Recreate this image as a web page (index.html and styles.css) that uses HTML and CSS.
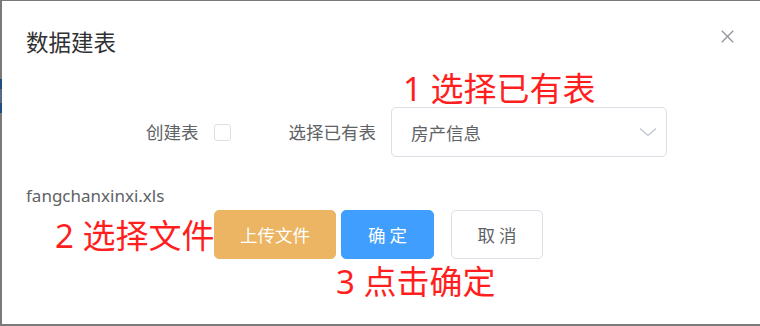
FILE: index.html
```html
<!DOCTYPE html>
<html lang="zh">
<head>
<meta charset="utf-8">
<title>数据建表</title>
<link rel="stylesheet" href="styles.css">
</head>
<body>
<div class="backdrop">
  <div class="edge-mark"></div>
  <div class="dialog">
    <div class="header">
      <span class="title">数据建表</span>
      <svg class="close" width="13" height="13" viewBox="0 0 13 13"><path d="M0.8 0.8 L12.2 12.2 M12.2 0.8 L0.8 12.2" stroke="#909399" stroke-width="1.3" fill="none"/></svg>
    </div>
    <div class="body">
      <div class="form-row">
        <span class="label">创建表</span>
        <span class="checkbox"></span>
        <span class="label label-select">选择已有表</span>
        <div class="select">
          <span class="select-value">房产信息</span>
          <svg class="chevron" width="18" height="10" viewBox="0 0 18 10"><polyline points="1,1.5 9,8.5 17,1.5" stroke="#c0c4cc" stroke-width="1.3" fill="none"/></svg>
        </div>
      </div>
      <div class="file-name">fangchanxinxi.xls</div>
      <div class="actions">
        <button class="btn btn-upload">上传文件</button>
        <button class="btn btn-primary">确 定</button>
        <button class="btn btn-default">取 消</button>
      </div>
    </div>
    <span class="note note-1">1 选择已有表</span>
    <span class="note note-2">2 选择文件</span>
    <span class="note note-3">3 点击确定</span>
  </div>
</div>
</body>
</html>
```

FILE: styles.css
```css
html, body {
  margin: 0;
  padding: 0;
}
body {
  width: 760px;
  height: 326px;
  overflow: hidden;
  background: #7a7a7a;
  font-family: "Noto Sans", "Noto Sans CJK SC", sans-serif;
}
.backdrop {
  position: relative;
  height: 326px;
  padding: 1px 0 0 2px;
  box-sizing: border-box;
}
.edge-mark {
  position: absolute;
  left: 0;
  top: 79px;
  width: 2px;
  height: 34px;
  background: linear-gradient(#1e4f7c 0 30%, #5a6a86 30% 70%, #1e4f7c 70%);
}
.dialog {
  position: relative;
  background: #fff;
  height: 323px;
  box-sizing: border-box;
}
.header {
  display: flex;
  justify-content: space-between;
  align-items: flex-start;
  padding: 25px 26px 0 24px;
  height: 30px;
}
.title {
  font-size: 22.5px;
  line-height: 30px;
  color: #303133;
  font-family: "Noto Sans CJK SC", sans-serif;
}
.close {
  display: block;
  margin-top: 4px;
}
.body {
  padding: 0 0 0 24px;
}
.form-row {
  display: flex;
  align-items: center;
  margin-top: 51px;
  padding-left: 120px;
  height: 50px;
}
.label {
  font-family: "Noto Sans CJK SC", sans-serif;
  font-size: 17.5px;
  color: #606266;
  line-height: 24px;
}
.checkbox {
  width: 15px;
  height: 15px;
  border: 1px solid #dcdfe6;
  border-radius: 3px;
  margin-left: 15px;
  background: #fff;
}
.label-select {
  margin-left: 58px;
}
.select {
  margin-left: 15px;
  width: 276px;
  height: 50px;
  box-sizing: border-box;
  border: 1px solid #dcdfe6;
  border-radius: 5px;
  display: flex;
  align-items: center;
  justify-content: space-between;
  padding: 0 9px 0 19px;
}
.select-value {
  font-family: "Noto Sans CJK SC", sans-serif;
  font-size: 17.5px;
  color: #606266;
}
.chevron {
  display: block;
}
.file-name {
  margin-top: 27px;
  font-size: 17px;
  line-height: 24px;
  color: #606266;
}
.actions {
  display: flex;
  margin-top: 2px;
  padding-left: 188px;
}
.btn {
  height: 49px;
  border-radius: 5px;
  border: 1px solid transparent;
  font-family: "Noto Sans CJK SC", sans-serif;
  font-size: 17.5px;
  padding: 0;
  cursor: pointer;
}
.btn-upload {
  width: 122px;
  background: #ebb563;
  border-color: #ebb563;
  color: #fff;
}
.btn-primary {
  width: 93px;
  margin-left: 5px;
  background: #409eff;
  border-color: #409eff;
  color: #fff;
}
.btn-default {
  width: 92px;
  margin-left: 17px;
  background: #fff;
  border-color: #dcdfe6;
  color: #606266;
}
.note {
  position: absolute;
  font-family: "Noto Sans", "Noto Sans CJK SC", sans-serif;
  font-size: 33px;
  line-height: 1;
  color: #ff1f1f;
  white-space: nowrap;
}
.note-1 {
  left: 401px;
  top: 71px;
}
.note-2 {
  left: 53px;
  top: 218px;
}
.note-3 {
  left: 334px;
  top: 264px;
}
```
